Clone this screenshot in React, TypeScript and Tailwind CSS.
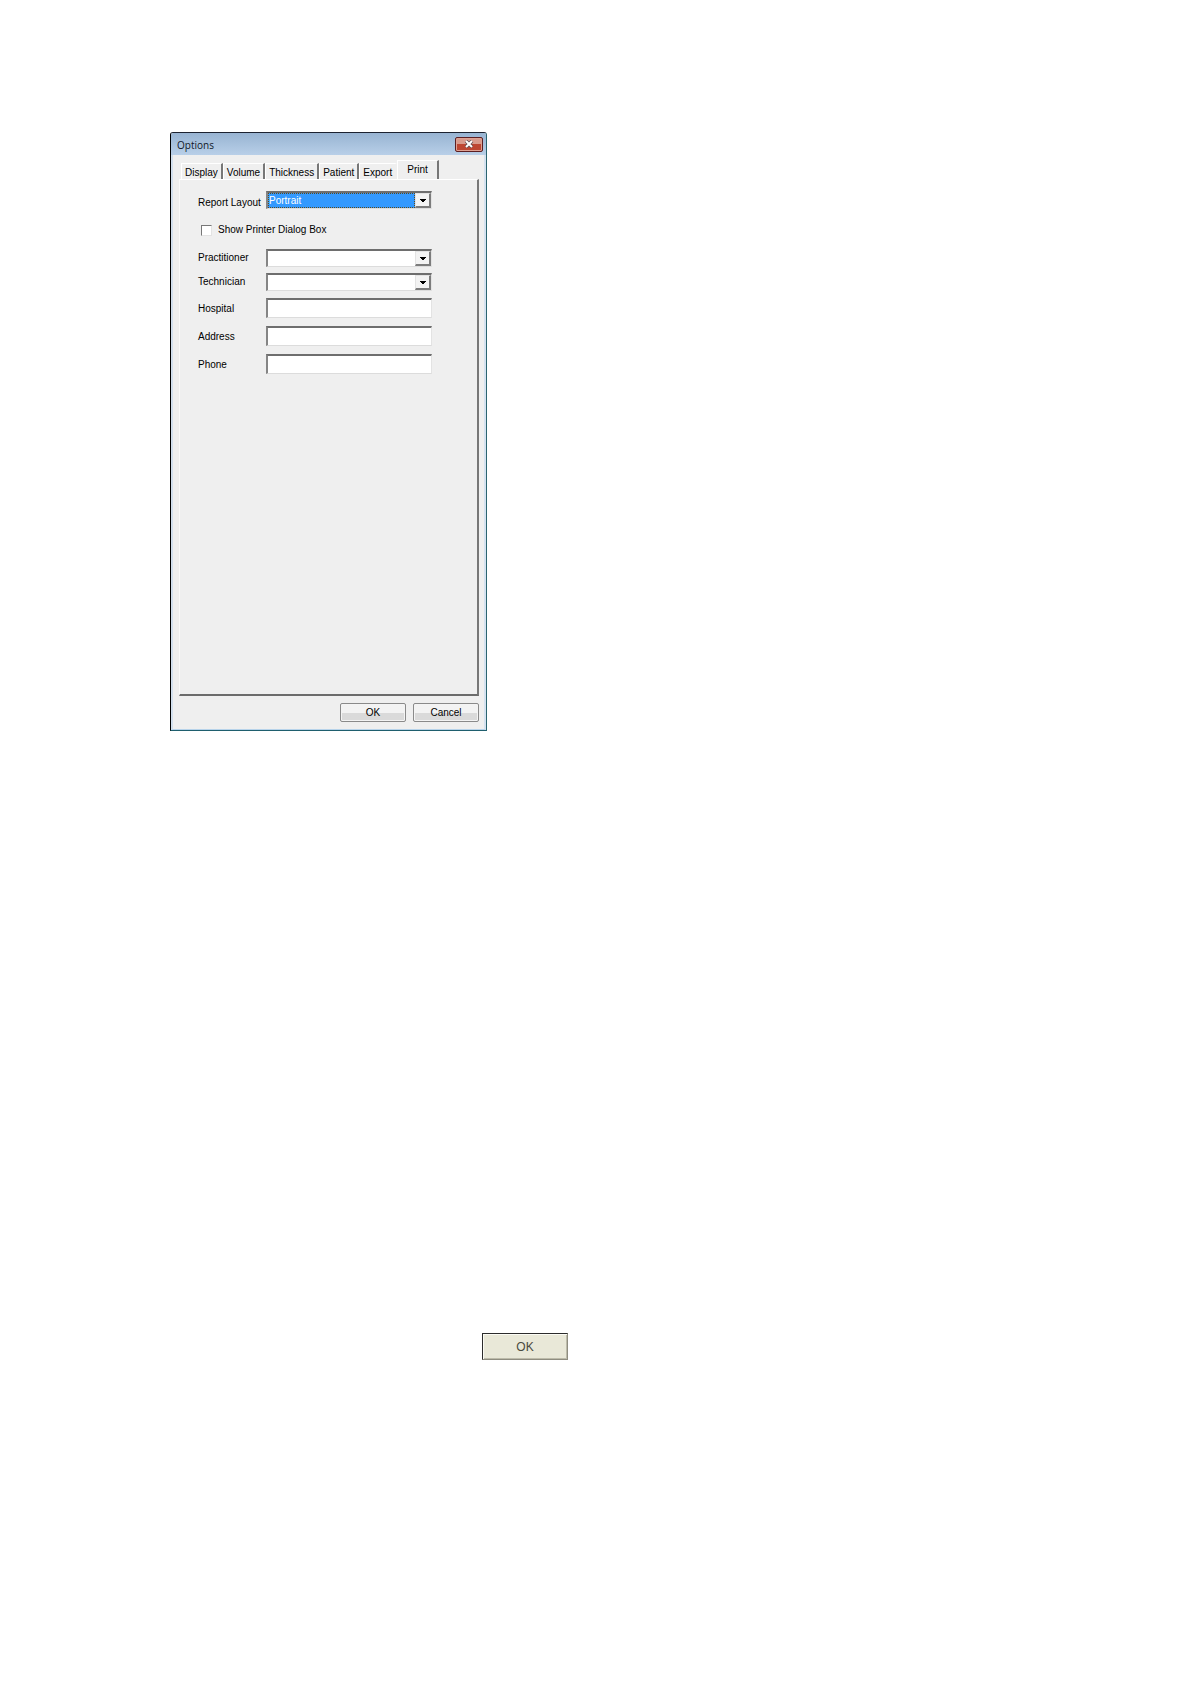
import { useState } from 'react';

const tabs = ['Display', 'Volume', 'Thickness', 'Patient', 'Export', 'Print'];

const sunken =
  'border-t-2 border-l-2 border-r border-b border-t-[#6e6e6e] border-l-[#858585] border-r-[#e3e3e3] border-b-[#dcdcdc] bg-white';

type SelectRowProps = {
  id: string;
  label: string;
  options: string[];
  highlighted?: boolean;
};

function SelectRow({ id, label, options, highlighted }: SelectRowProps) {
  return (
    <div className={highlighted ? 'flex items-end' : 'flex items-center'}>
      <label htmlFor={id} className="w-[68px] shrink-0 leading-3">
        {label}
      </label>
      <div className={`flex h-[18px] min-w-0 flex-1 ${sunken}`}>
        <select
          id={id}
          className={
            highlighted
              ? 'min-w-0 flex-1 appearance-none border border-dotted border-[#5a4a20] bg-[#3399ff] leading-3 text-white outline-none'
              : 'min-w-0 flex-1 appearance-none bg-white pl-px leading-3 outline-none'
          }
        >
          {options.map((option) => (
            <option key={option}>{option}</option>
          ))}
        </select>
        <span className="flex w-4 shrink-0 items-center justify-center border-t border-r-2 border-b-2 border-l border-t-[#e3e3e3] border-l-[#e3e3e3] border-r-[#7c7c7c] border-b-[#7c7c7c] bg-[#f3f3f3]">
          <svg className="h-[3px] w-[6px]" viewBox="0 0 6 3" fill="#000" shapeRendering="crispEdges">
            <path d="M0 0h6v1H5v1H4v1H2V2H1V1H0z" />
          </svg>
        </span>
      </div>
    </div>
  );
}

function TextRow({ id, label }: { id: string; label: string }) {
  return (
    <div className="flex items-center">
      <label htmlFor={id} className="w-[68px] shrink-0 pt-0.5 leading-3">
        {label}
      </label>
      <input id={id} type="text" className={`h-5 min-w-0 flex-1 px-1 outline-none ${sunken}`} />
    </div>
  );
}

function tabClass(index: number, activeIndex: number) {
  if (index === activeIndex) {
    return 'h-[19px] border-t border-r-2 border-l border-t-white border-r-[#777] border-l-white px-[9px] pb-px leading-3';
  }
  // the raised tab covers the edge of the one before it
  if (index === activeIndex - 1) {
    return 'h-4 border-t border-r-2 border-l border-t-white border-r-transparent border-l-white px-[3px] pt-0.5 leading-3';
  }
  return 'h-4 border-t border-r-2 border-l border-t-white border-r-[#777] border-l-white px-[3px] pt-0.5 leading-3';
}

export default function App() {
  const [active, setActive] = useState(5);

  const buttonClass =
    'h-[19px] w-[66px] rounded-[2px] border border-[#8a8a8a] bg-linear-to-b from-[#f3f3f3] from-50% to-[#dadada] to-50% leading-3 shadow-[inset_0_0_0_1px_#f4f4f4]';

  return (
    <main className="min-h-screen bg-white px-[170px] pt-[132px] pb-12 font-['Liberation_Sans',Arial,sans-serif] text-[10px] text-black">
      <section
        aria-label="Options"
        className="w-full max-w-[317px] rounded-t-[3px] border border-t-[#1c2230] border-l-black border-r-[#2b6470] border-b-[#1f5f6e] bg-[#efefef]"
      >
        {/* Title bar */}
        <header className="flex h-[22px] items-center justify-between rounded-t-[2px] bg-linear-to-b from-[#98b4d2] to-[#b8cfe8] pr-[3px] pl-1.5">
          <h1 className="pt-0.5 font-['Open_Sans',sans-serif] text-[10px] text-[#101828]">Options</h1>
          <button
            type="button"
            aria-label="Close"
            className="flex h-[15px] w-7 items-center justify-center rounded-[2px] border border-[#5c1f22] bg-linear-to-b from-[#d89a8c] from-45% to-[#bd4632] to-45% shadow-[inset_0_0_0_1px_#dfa193]"
          >
            <svg className="h-2 w-2.5" viewBox="0 0 10 8">
              <path d="M2 1l6 6M8 1L2 7" stroke="#5b4a50" strokeWidth="3.4" />
              <path d="M2 1l6 6M8 1L2 7" stroke="#fff" strokeWidth="2" />
            </svg>
          </button>
        </header>

        <div className="border-x-2 border-b border-l-[#d3e0ee] border-r-[#d5e2f0] border-b-[#b7d3ea] pt-[5px] pr-[5px] pb-[7px] pl-1.5">
          {/* Tabs */}
          <div role="tablist" className="flex items-end pl-0.5">
            {tabs.map((tab, index) => (
              <button
                key={tab}
                type="button"
                role="tab"
                aria-selected={index === active}
                onClick={() => setActive(index)}
                className={tabClass(index, active)}
              >
                {tab}
              </button>
            ))}
          </div>

          {/* Print settings */}
          <div
            role="tabpanel"
            className="min-h-[517px] border border-r-2 border-b-2 border-t-white border-l-[#fafafa] border-r-[#777] border-b-[#6b6b6b] pt-[11px] pr-[45px] pl-[18px]"
          >
            <SelectRow id="layout" label="Report Layout" options={['Portrait', 'Landscape']} highlighted />

            <label className="mt-[15px] flex h-3 items-center gap-1.5 pl-[3px] leading-3">
              <input
                type="checkbox"
                className="h-[11px] w-[11px] appearance-none border border-t-[#777] border-l-[#777] border-r-[#e3e3e3] border-b-[#e3e3e3] bg-white checked:bg-[#3399ff]"
              />
              Show Printer Dialog Box
            </label>

            <div className="mt-[13px] flex flex-col gap-1.5">
              <SelectRow id="practitioner" label="Practitioner" options={['']} />
              <SelectRow id="technician" label="Technician" options={['']} />
            </div>
            <div className="mt-[7px] flex flex-col gap-2">
              <TextRow id="hospital" label="Hospital" />
              <TextRow id="address" label="Address" />
              <TextRow id="phone" label="Phone" />
            </div>
          </div>

          <footer className="mt-[7px] flex justify-end gap-[7px]">
            <button type="button" className={buttonClass}>
              OK
            </button>
            <button type="button" className={buttonClass}>
              Cancel
            </button>
          </footer>
        </div>
      </section>

      <button
        type="button"
        className="mt-[602px] ml-[312px] block h-[27px] w-[86px] border border-t-[#2c2c2c] border-r-[#8f8d80] border-b-[#8f8d80] border-l-[#2c2c2c] bg-[#e9e8d8] text-xs text-[#4a4a40] shadow-[inset_1px_1px_0_#fbfbf4,inset_-1px_-1px_0_#bdbbaa]"
      >
        OK
      </button>
    </main>
  );
}
